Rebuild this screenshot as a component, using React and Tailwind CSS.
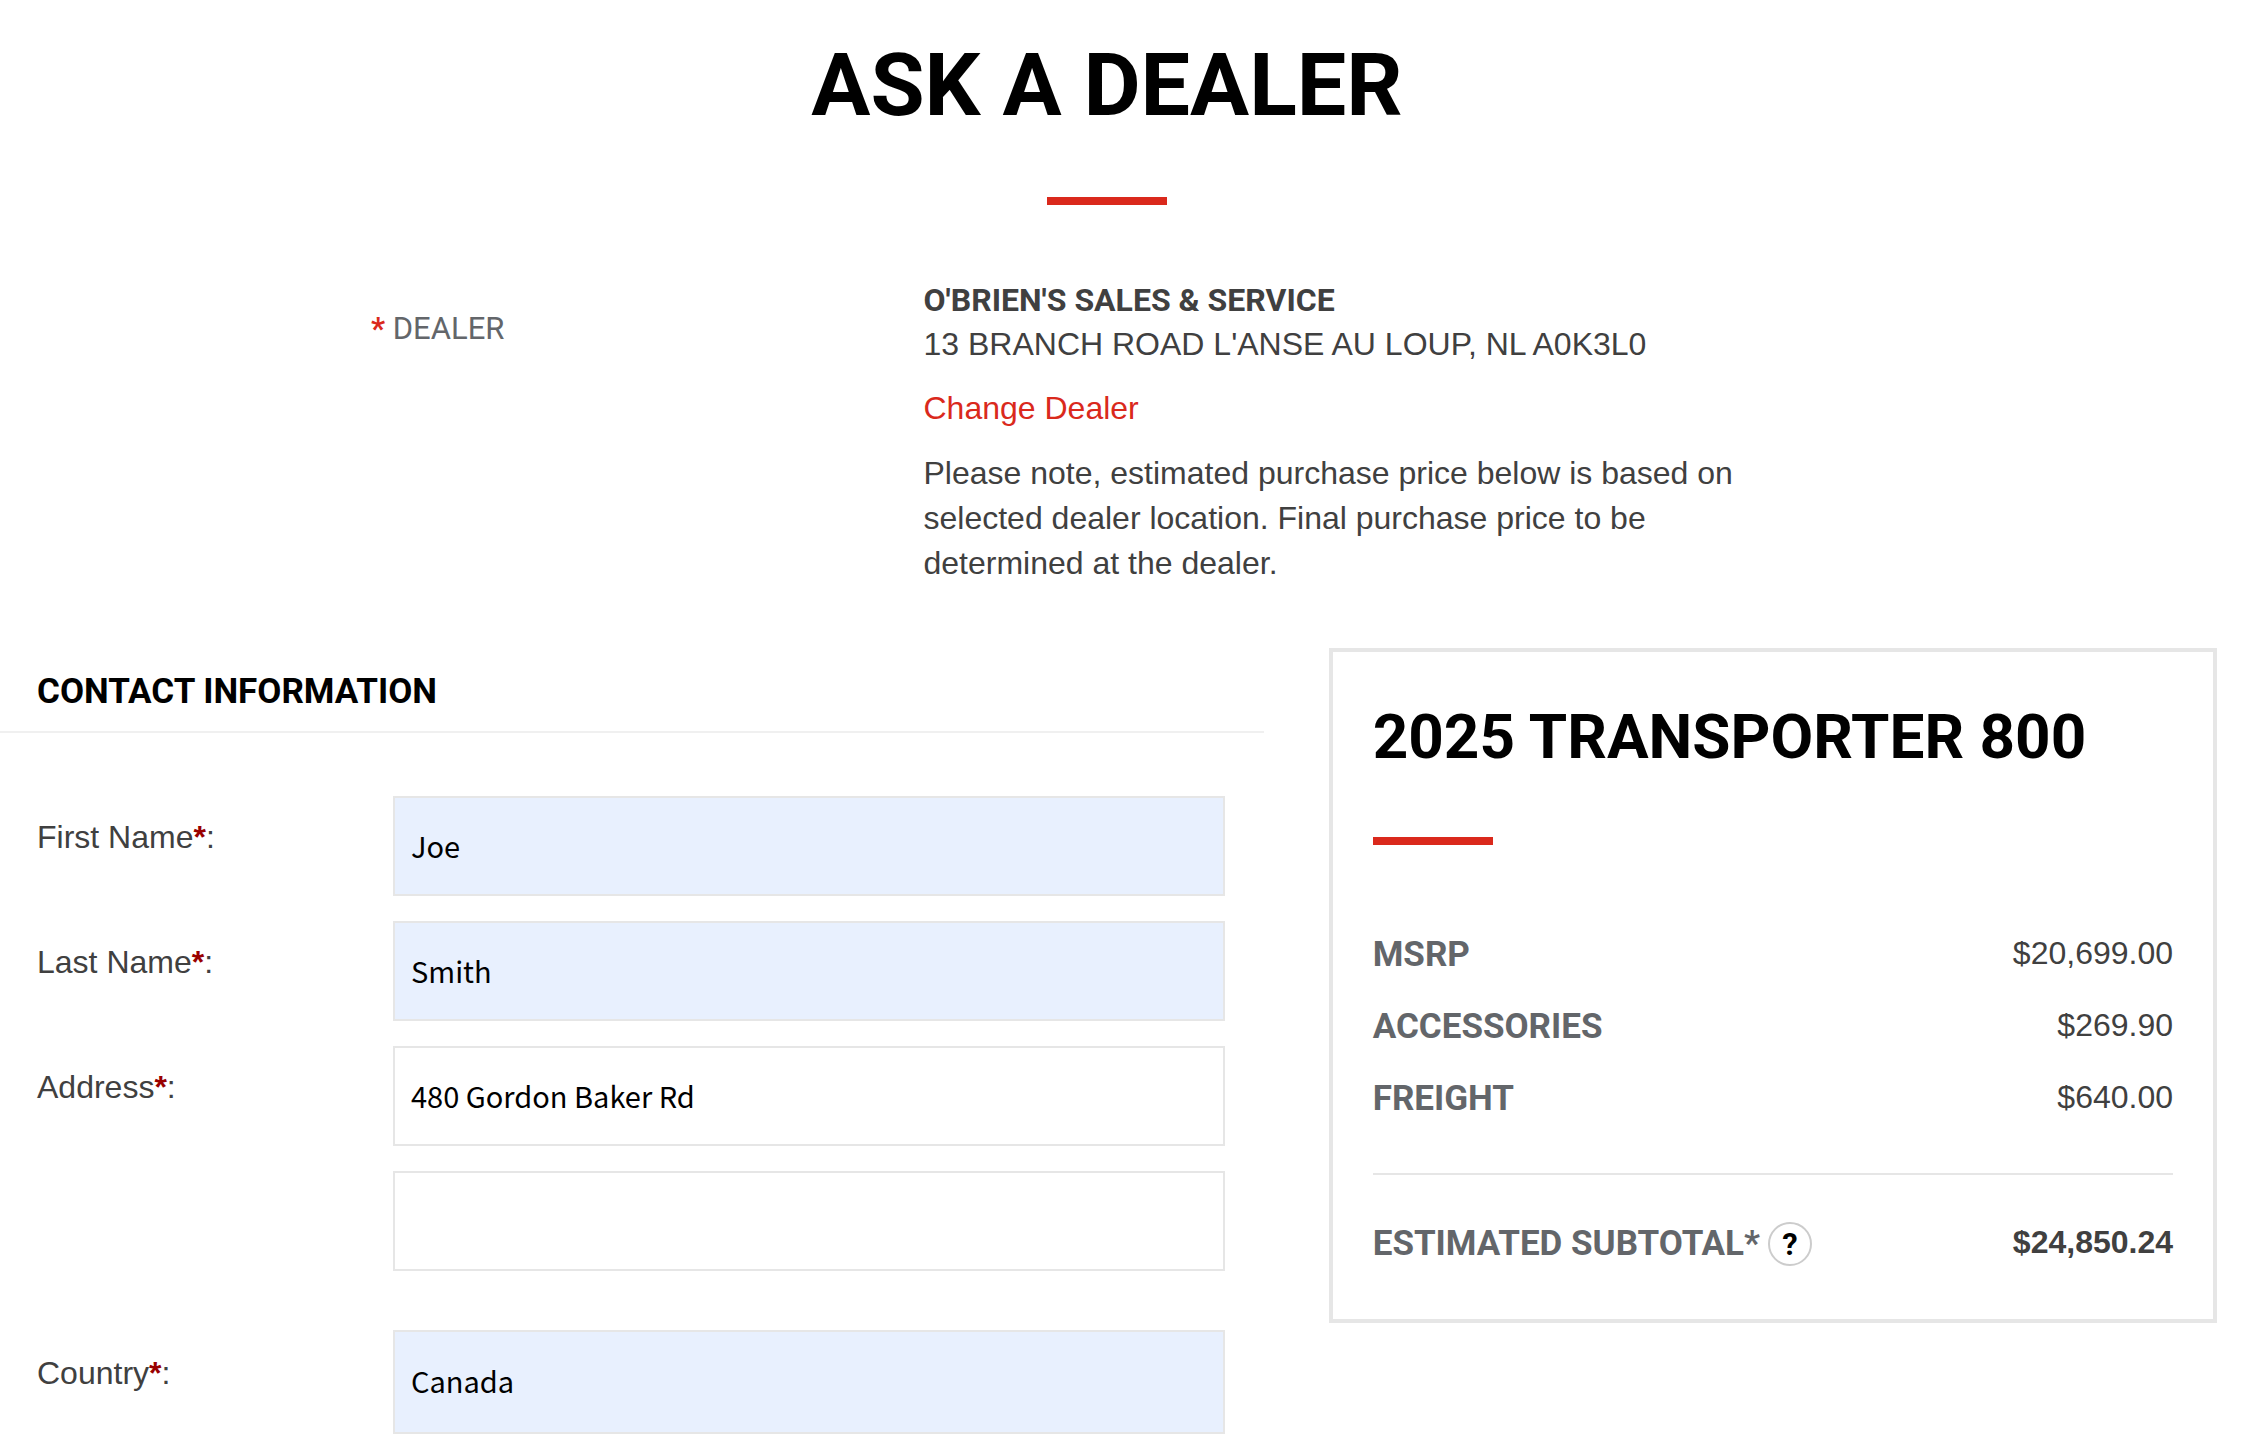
const sans = "font-['Liberation_Sans',Arial,sans-serif]";
const display = "font-['Roboto',sans-serif]";

const priceRows = [
  { label: "MSRP", value: "$20,699.00" },
  { label: "ACCESSORIES", value: "$269.90" },
  { label: "FREIGHT", value: "$640.00" },
];

const controlClass =
  "block w-full appearance-none rounded-none border-2 border-[#e6e6e6] px-4 pb-[2px] font-['Noto_Sans_CJK_SC',sans-serif] text-[29px] text-black outline-none focus:border-gray-400";

function Field({ id, label, children }) {
  return (
    <div className="flex items-center">
      <div className="w-[356px] shrink-0 pb-[18px] text-[32px] leading-[45px]">
        {label && (
          <label htmlFor={id}>
            {label}
            <span className="font-bold text-[#990000]">*</span>:
          </label>
        )}
      </div>
      <div className="min-w-0 flex-1">{children}</div>
    </div>
  );
}

function DealerSection() {
  return (
    <section className="mt-[73px] flex">
      <div className="w-1/6 shrink-0" />
      <div className={`${display} mt-7 w-1/4 shrink-0 pl-[2px] text-[31px] leading-[45px] text-[#63666a]`}>
        <span className="font-bold text-[#da291c]">*</span> DEALER
      </div>
      <div className="w-[39%] pl-px text-[32px] leading-[45px]">
        <h2 className={`${display} text-[32px] leading-[44px] font-bold`}>O'BRIEN'S SALES &amp; SERVICE</h2>
        <p className="leading-[44px]">13 BRANCH ROAD L'ANSE AU LOUP, NL A0K3L0</p>
        <p className="mt-5">
          <a href="#dealer" className="text-[#da291c]">
            Change Dealer
          </a>
        </p>
        <p className="mt-5">
          Please note, estimated purchase price below is based on selected dealer location. Final purchase price to be
          determined at the dealer.
        </p>
      </div>
    </section>
  );
}

function ContactForm() {
  return (
    <form className="w-[57%] shrink-0 pt-[22px]">
      <h2
        className={`${display} border-b-2 border-[#f0f0f0] pb-[17px] pl-[37px] text-[35px] leading-[44px] font-bold text-black`}
      >
        CONTACT INFORMATION
      </h2>
      <div className="mt-[63px] flex flex-col gap-[25px] pr-[39px] pl-[37px]">
        <Field id="first-name" label="First Name">
          <input id="first-name" type="text" defaultValue="Joe" className={`${controlClass} h-[100px] bg-[#e8f0fe]`} />
        </Field>
        <Field id="last-name" label="Last Name">
          <input id="last-name" type="text" defaultValue="Smith" className={`${controlClass} h-[100px] bg-[#e8f0fe]`} />
        </Field>
        <Field id="address" label="Address">
          <input
            id="address"
            type="text"
            defaultValue="480 Gordon Baker Rd"
            className={`${controlClass} h-[100px] bg-white`}
          />
        </Field>
        <Field>
          <input type="text" aria-label="Address line 2" className={`${controlClass} h-[100px] bg-white`} />
        </Field>
        <div className="mt-[34px]">
          <Field id="country" label="Country">
            <select id="country" defaultValue="Canada" className={`${controlClass} h-[104px] bg-[#e8f0fe]`}>
              <option>Canada</option>
            </select>
          </Field>
        </div>
      </div>
    </form>
  );
}

function PriceCard() {
  return (
    <aside className="flex-1 self-start border-4 border-[#e6e6e6] px-10 pt-[54px] pb-[53px]">
      <h2 className={`${display} text-[62px] leading-[62px] font-bold whitespace-nowrap text-black`}>
        2025 TRANSPORTER 800
      </h2>
      <div className="mt-[69px] h-2 w-[120px] bg-[#da291c]" />
      <dl className="mt-[88px] flex flex-col gap-7">
        {priceRows.map((row) => (
          <div key={row.label} className="flex items-start justify-between">
            <dt className={`${display} text-[35px] leading-[44px] font-bold text-[#63666a]`}>{row.label}</dt>
            <dd className="text-[32px] leading-10">{row.value}</dd>
          </div>
        ))}
      </dl>
      <dl className="mt-[52px] flex items-start justify-between border-t-2 border-[#e6e6e6] pt-[47px]">
        <dt className={`${display} flex items-center gap-2 text-[35px] leading-[44px] font-bold text-[#63666a]`}>
          ESTIMATED SUBTOTAL*
          <button
            type="button"
            aria-label="About the estimated subtotal"
            className="flex size-11 items-center justify-center rounded-full border-2 border-[#cccccc] text-[31px] leading-none font-bold text-black"
          >
            ?
          </button>
        </dt>
        <dd className="text-[32px] leading-10 font-bold">$24,850.24</dd>
      </dl>
    </aside>
  );
}

export default function App() {
  return (
    <main className={`${sans} min-h-screen bg-white text-[#404040]`}>
      <div className="pt-[41px] pr-10">
        <h1 className={`${display} text-center text-[88px] leading-[88px] font-bold text-black`}>ASK A DEALER</h1>
        <div className="mx-auto mt-[68px] h-2 w-[120px] bg-[#da291c]" />
        <DealerSection />
      </div>
      <div className="mt-[62px] flex gap-[65px] pr-[37px]">
        <ContactForm />
        <PriceCard />
      </div>
    </main>
  );
}
